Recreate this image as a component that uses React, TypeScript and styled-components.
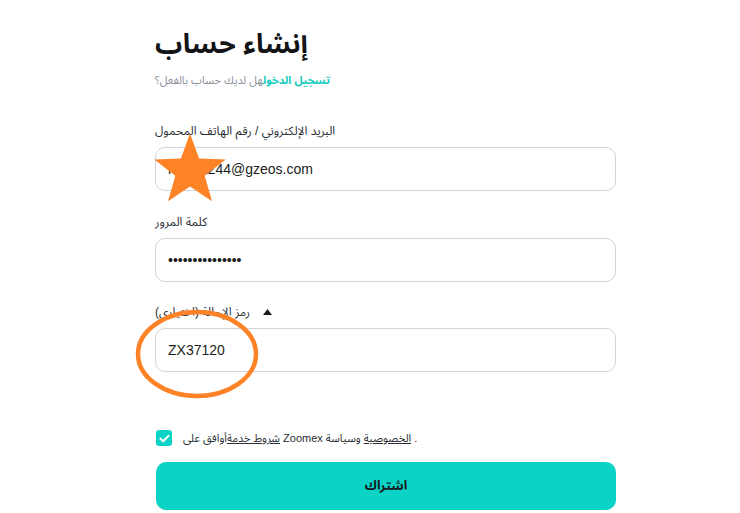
import React from "react";
import styled, { createGlobalStyle } from "styled-components";

const FONT = `"Liberation Sans", "Noto Sans Arabic", "DejaVu Sans", sans-serif`;

const Global = createGlobalStyle`
  html, body { margin: 0; padding: 0; background: #ffffff; }
  body { font-family: ${FONT}; color: #1f2329; }
  * { box-sizing: border-box; }
`;

const Page = styled.div`
  position: relative;
  width: 740px;
  height: 513px;
  overflow: hidden;
  padding: 20px 0 0 155px;
`;

const Form = styled.div`
  width: 461px;
  display: flex;
  flex-direction: column;
`;

const Title = styled.h1`
  margin: 0;
  font-size: 27px;
  line-height: 48px;
  font-weight: 700;
  color: #121417;
`;

const Sub = styled.p`
  margin: 2px 0 0;
  font-size: 11px;
  line-height: 20px;
  color: #8a9099;
`;

const TealLink = styled.a`
  color: #13cbbd;
  font-weight: 700;
  text-decoration: none;
`;

const Field = styled.div<{ $top: number }>`
  display: flex;
  flex-direction: column;
  gap: 8px;
  margin-top: ${(p) => p.$top}px;
`;

const Label = styled.label`
  display: flex;
  align-items: center;
  gap: 13px;
  font-size: 12px;
  line-height: 16px;
  color: #2a2e34;
`;

const Input = styled.input`
  width: 100%;
  height: 44px;
  border: 1px solid #cfd6df;
  border-radius: 10px;
  padding: 0 12px;
  font-family: ${FONT};
  font-size: 14px;
  color: #1b1d21;
  background: #fff;
  outline: none;
`;

const AgreeRow = styled.div`
  display: flex;
  align-items: center;
  gap: 11px;
  margin-top: 56px;
  padding-left: 1px;
  height: 20px;
`;

const Check = styled.span`
  width: 16px;
  height: 16px;
  border-radius: 3px;
  background: #0bd3c5;
  display: inline-flex;
  align-items: center;
  justify-content: center;
  flex: none;
`;

const AgreeText = styled.span`
  font-size: 11px;
  line-height: 16px;
  color: #2a2e34;
`;

const U = styled.a`
  color: #2a2e34;
  text-decoration: underline;
`;

const Submit = styled.button`
  margin-top: 14px;
  margin-left: 1px;
  width: 460px;
  height: 48px;
  border: none;
  border-radius: 10px;
  background: #0bd3c5;
  font-family: ${FONT};
  font-size: 13px;
  font-weight: 700;
  color: #15181c;
`;

const Overlay = styled.svg`
  position: absolute;
  left: 0;
  top: 0;
  pointer-events: none;
`;

function starPoints(cx: number, cy: number, R: number, r: number) {
  const pts: string[] = [];
  for (let i = 0; i < 10; i++) {
    const rad = i % 2 === 0 ? R : r;
    const a = (Math.PI / 5) * i;
    pts.push(`${(cx + rad * Math.sin(a)).toFixed(1)},${(cy - rad * Math.cos(a)).toFixed(1)}`);
  }
  return pts.join(" ");
}

export default function App() {
  return (
    <>
      <Global />
      <Page>
        <Form>
          <Title>إنشاء حساب</Title>
          <Sub>
            <TealLink href="#">تسجيل الدخول</TealLink>هل لديك حساب بالفعل؟
          </Sub>

          <Field $top={33}>
            <Label>البريد الإلكتروني / رقم الهاتف المحمول</Label>
            <Input defaultValue="rahma244@gzeos.com" readOnly />
          </Field>

          <Field $top={23}>
            <Label>كلمة المرور</Label>
            <Input type="password" defaultValue="abcdefghijklmno" readOnly />
          </Field>

          <Field $top={22}>
            <Label>
              رمز الإحالة (اختياري)
              <svg width="9" height="6" viewBox="0 0 9 6">
                <path d="M4.5 0 L9 6 L0 6 Z" fill="#1b1d21" />
              </svg>
            </Label>
            <Input defaultValue="ZX37120" readOnly />
          </Field>

          <AgreeRow>
            <Check>
              <svg width="11" height="9" viewBox="0 0 11 9">
                <path d="M1.3 4.6 L4.2 7.3 L9.7 1.6" fill="none" stroke="#fff" strokeWidth="2" strokeLinecap="round" strokeLinejoin="round" />
              </svg>
            </Check>
            <AgreeText>
              <U href="#">شروط خدمة</U>أوافق على Zoomex <U href="#">الخصوصية</U> وسياسة .
            </AgreeText>
          </AgreeRow>

          <Submit>اشتراك</Submit>
        </Form>

        <Overlay width="740" height="513" viewBox="0 0 740 513">
          <polygon points={starPoints(190, 171, 37.5, 15.5)} fill="#fd8326" />
          <ellipse cx="197" cy="354" rx="59" ry="42" fill="none" stroke="#fd8326" strokeWidth="4.5" />
        </Overlay>
      </Page>
    </>
  );
}
